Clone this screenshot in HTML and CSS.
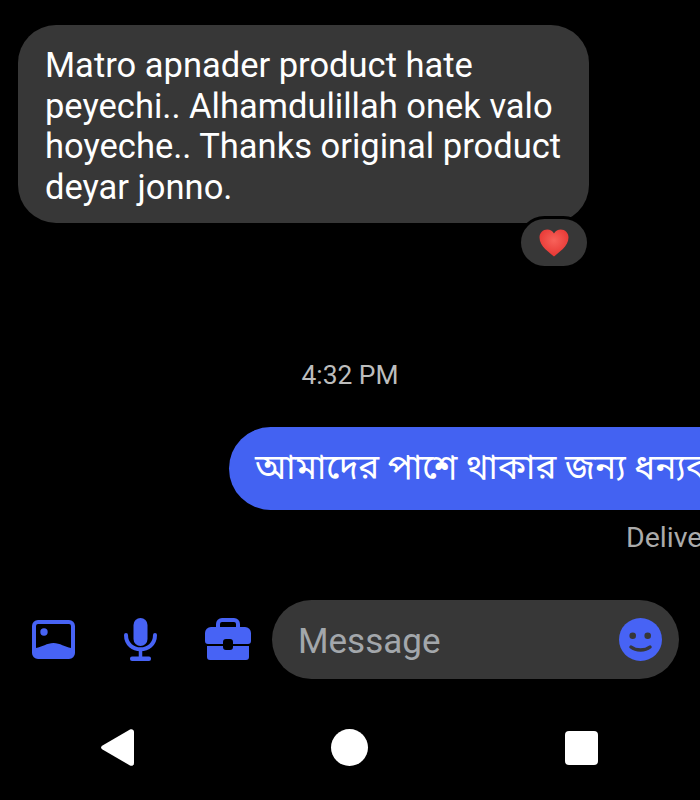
FILE: index.html
```html
<!DOCTYPE html>
<html lang="en">
<head>
  <meta charset="UTF-8" />
  <title>Messages</title>
  <link rel="stylesheet" href="styles.css">
</head>
<body>

<div class="thread">
  <div class="bubble-in">Matro apnader product hate peyechi.. Alhamdulillah onek valo hoyeche.. Thanks original product deyar jonno.</div>
  <div class="reaction">
    <svg class="heart" viewBox="0 0 30 28">
      <defs>
        <radialGradient id="heartFill" cx="50%" cy="40%" r="65%">
          <stop offset="0" stop-color="#f8625a" />
          <stop offset="1" stop-color="#e5322f" />
        </radialGradient>
      </defs>
      <path fill="url(#heartFill)" d="M15 27.500C12 24.500 .5 18 .5 8.500 .5 3.800 4 .5 8.200 .5 11 .5 13.600 2 15 4.500 16.400 2 19 .5 21.800 .5 26 .5 29.500 3.800 29.500 8.500 29.500 18 18 24.500 15 27.500Z" />
    </svg>
  </div>

  <div class="time">4:32 PM</div>

  <div class="bubble-out">আমাদের পাশে থাকার জন্য ধন্যবাদ</div>
  <div class="status">Delivered</div>
</div>

<div class="composer">
  <div class="tools">
    <svg class="icon-image" viewBox="0 0 43 39">
      <path fill="#4763f5" fill-rule="evenodd" d="M6 0H37A6 6 0 0 1 43 6V33A6 6 0 0 1 37 39H6A6 6 0 0 1 0 33V6A6 6 0 0 1 6 0ZM6 4A2 2 0 0 0 4 6V28C10 27 15 23 21.500 23 28 23 33 27 39 28V6A2 2 0 0 0 37 4Z" />
      <circle fill="#4763f5" cx="12" cy="12" r="3.700" />
    </svg>
    <svg class="icon-mic" viewBox="0 0 33 43">
      <rect fill="#4763f5" x="9.500" y="0" width="14" height="28" rx="7" />
      <path fill="none" stroke="#4763f5" stroke-width="4" stroke-linecap="round" d="M2 17C2 36 31 36 31 17" />
      <path fill="none" stroke="#4763f5" stroke-width="3.500" d="M16.500 31V40" />
      <rect fill="#4763f5" x="6" y="38.500" width="21" height="4.500" rx="2" />
    </svg>
    <svg class="icon-case" viewBox="0 0 46 43">
      <path fill="none" stroke="#4763f5" stroke-width="4" d="M13 11V6A4 4 0 0 1 17 2H29A4 4 0 0 1 33 6V11" />
      <path fill="#4763f5" d="M6 9H40A6 6 0 0 1 46 15V23A3 3 0 0 1 43 26H28V24A3 3 0 0 0 25 21H21A3 3 0 0 0 18 24V26H3A3 3 0 0 1 0 23V15A6 6 0 0 1 6 9Z" />
      <path fill="#4763f5" d="M2 28H18V29A3 3 0 0 0 21 32H25A3 3 0 0 0 28 29V28H44V39A3 3 0 0 1 41 42H5A3 3 0 0 1 2 39Z" />
    </svg>
  </div>
  <div class="input">
    <span class="placeholder">Message</span>
    <svg class="icon-smile" viewBox="0 0 43 43">
      <circle fill="#4763f5" cx="21.500" cy="21.500" r="21.500" />
      <circle fill="#373737" cx="13.700" cy="17.700" r="3.300" />
      <circle fill="#373737" cx="28.700" cy="17.700" r="3.300" />
      <path fill="none" stroke="#373737" stroke-width="3.500" stroke-linecap="round" d="M12 29C17 33 26 33 31 29" />
    </svg>
  </div>
</div>

<div class="navbar">
  <svg class="nav-back" viewBox="0 0 33 37">
    <path fill="#fff" d="M1.500 16.500 29 .5C31 -.5 33 .8 33 3V34C33 36.200 31 37.500 29 36.500L1.500 20.500C-.5 19.300 -.5 17.700 1.500 16.500Z" />
  </svg>
  <div class="nav-home"></div>
  <div class="nav-recent"></div>
</div>

</body>
</html>
```

FILE: styles.css
```css
html, body {
  margin: 0;
  padding: 0;
}
body {
  width: 700px;
  height: 800px;
  overflow: hidden;
  background: #000;
  font-family: Roboto, "Noto Sans Bengali", "Noto Sans", sans-serif;
}
.thread {
  height: 600px;
  padding-top: 25px;
  box-sizing: border-box;
}
.bubble-in {
  width: 571px;
  height: 198px;
  box-sizing: border-box;
  margin-left: 18px;
  padding: 20px 16px 0 27px;
  background: #373737;
  border-radius: 38px;
  color: #fff;
  font-size: 34.500px;
  line-height: 40.500px;
}
.reaction {
  display: flex;
  align-items: center;
  justify-content: center;
  width: 66px;
  height: 47px;
  margin: -4px 0 0 521px;
  position: relative;
  background: #373737;
  border-radius: 24px;
  box-shadow: 0 0 0 3px #000;
}
.heart {
  width: 30px;
  height: 28px;
}
.time {
  margin-top: 92px;
  text-align: center;
  color: #bdbdbd;
  font-size: 26.400px;
  line-height: 34px;
}
.bubble-out {
  width: 560px;
  height: 83px;
  box-sizing: border-box;
  margin: 35px 0 0 229px;
  padding: 0 0 0 26px;
  background: #4362f2;
  border-radius: 42px 0 0 42px;
  color: #fff;
  font-size: 35px;
  line-height: 82px;
  white-space: nowrap;
  overflow: hidden;
}
.status {
  margin: 10px 0 0 626px;
  color: #ababab;
  font-size: 28.500px;
  line-height: 36px;
  white-space: nowrap;
}
.composer {
  display: flex;
  align-items: center;
  height: 79px;
  padding-left: 32px;
}
.tools {
  display: flex;
  align-items: center;
  gap: 48.500px;
  margin-right: 21px;
}
.icon-image {
  width: 43px;
  height: 39px;
}
.icon-mic {
  width: 33px;
  height: 43px;
}
.icon-case {
  width: 46px;
  height: 43px;
}
.input {
  display: flex;
  align-items: center;
  justify-content: space-between;
  width: 407px;
  height: 79px;
  box-sizing: border-box;
  padding: 0 17px 0 26px;
  background: #373737;
  border-radius: 40px;
}
.placeholder {
  padding-top: 3px;
  color: #a3a7ab;
  font-size: 35px;
}
.icon-smile {
  width: 43px;
  height: 43px;
}
.navbar {
  display: flex;
  align-items: center;
  height: 37px;
  margin-top: 50px;
  padding-left: 101px;
}
.nav-back {
  width: 33px;
  height: 37px;
  margin-right: 197px;
}
.nav-home {
  width: 37px;
  height: 37px;
  margin-right: 197px;
  background: #fff;
  border-radius: 50%;
}
.nav-recent {
  width: 33px;
  height: 34px;
  background: #fff;
  border-radius: 4px;
}
```
